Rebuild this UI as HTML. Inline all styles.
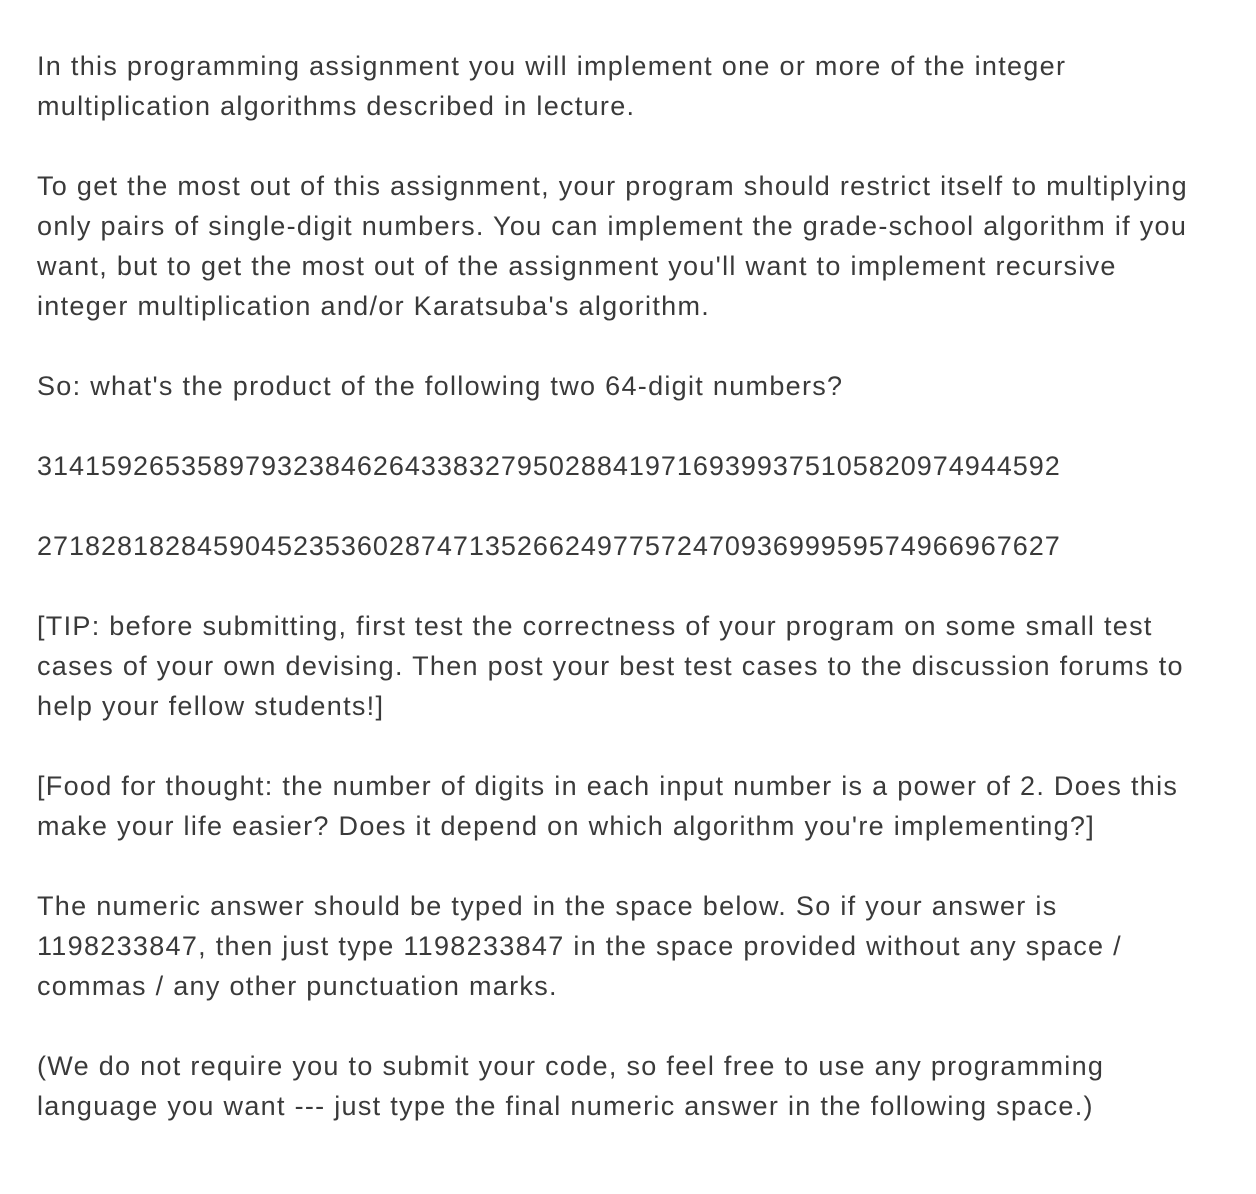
<!DOCTYPE html>
<html><head><meta charset="utf-8"><style>
html,body{margin:0;padding:0;background:#fff;width:1256px;height:1194px;overflow:hidden}
body{font-family:"Liberation Sans",sans-serif;font-size:27px;line-height:40px;color:#3a3a3a;letter-spacing:1.3px}
.c{position:absolute;left:37px;top:46px;white-space:nowrap}
p{margin:0 0 40px 0}
.n{letter-spacing:0.98px}
</style></head><body><div class="c">
<p>In this programming assignment you will implement one or more of the integer<br>multiplication algorithms described in lecture.</p>
<p>To get the most out of this assignment, your program should restrict itself to multiplying<br>only pairs of single-digit numbers. You can implement the grade-school algorithm if you<br>want, but to get the most out of the assignment you'll want to implement recursive<br>integer multiplication and/or Karatsuba's algorithm.</p>
<p>So: what's the product of the following two 64-digit numbers?</p>
<p class="n">3141592653589793238462643383279502884197169399375105820974944592</p>
<p class="n">2718281828459045235360287471352662497757247093699959574966967627</p>
<p>[TIP: before submitting, first test the correctness of your program on some small test<br>cases of your own devising. Then post your best test cases to the discussion forums to<br>help your fellow students!]</p>
<p>[Food for thought: the number of digits in each input number is a power of 2. Does this<br>make your life easier? Does it depend on which algorithm you're implementing?]</p>
<p>The numeric answer should be typed in the space below. So if your answer is<br>1198233847, then just type 1198233847 in the space provided without any space /<br>commas / any other punctuation marks.</p>
<p>(We do not require you to submit your code, so feel free to use any programming<br>language you want --- just type the final numeric answer in the following space.)</p>
</div></body></html>
